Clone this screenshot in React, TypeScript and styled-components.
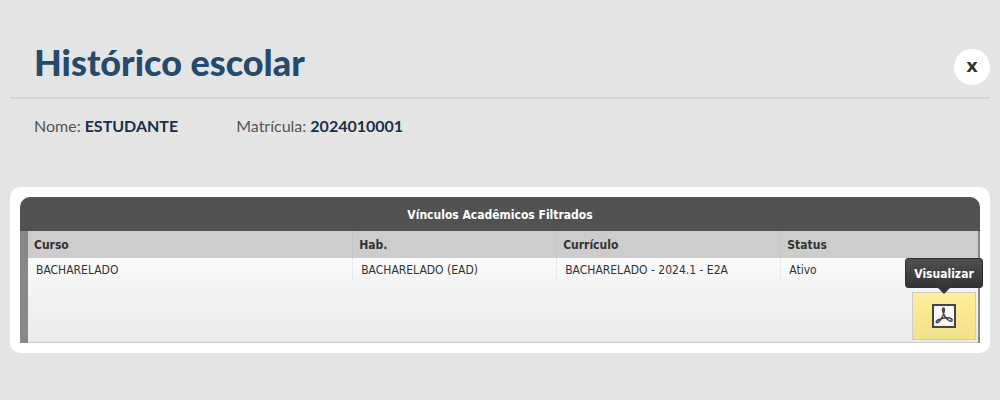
import React from "react";
import styled, { createGlobalStyle } from "styled-components";

const GlobalStyle = createGlobalStyle`
  *, *::before, *::after { box-sizing: border-box; }
  body {
    margin: 0;
    background: #e4e4e4;
    color: #333;
    font: 12px/16px "DejaVu Sans Condensed", "DejaVu Sans", sans-serif;
  }
`;

const Page = styled.main`
  padding: 38px 10px;
`;

const Header = styled.header`
  display: flex;
  align-items: center;
  justify-content: space-between;
  padding: 0 0 11px 24px;
  border-bottom: 2px solid #d5d5d5;
`;

const Title = styled.h1`
  margin: 0;
  color: #264a6e;
  font: 900 36px/48px "Lato Black", Lato, sans-serif;
`;

const CloseButton = styled.button`
  width: 36px;
  height: 36px;
  margin-top: 10px;
  padding: 0 0 2px;
  border: 0;
  border-radius: 50%;
  background: #fff;
  color: #333;
  font: 700 18px/34px "DejaVu Sans", sans-serif;
  cursor: pointer;
`;

const Details = styled.dl`
  display: flex;
  gap: 58px;
  margin: 15px 24px 49px;
  font: 16px/24px Lato, sans-serif;
`;

const Detail = styled.div`
  display: flex;
  gap: 4px;
`;

const Label = styled.dt`
  color: #555;
`;

const Value = styled.dd`
  margin: 0;
  color: #1a3048;
  font-weight: 700;
`;

const Panel = styled.section`
  padding: 10px;
  border-radius: 10px;
  background: #fff;
`;

const Table = styled.table`
  width: 100%;
  border-spacing: 0;
  table-layout: fixed;
`;

const Caption = styled.caption`
  padding: 10px 8px 8px;
  border-radius: 10px 10px 0 0;
  background: #525252;
  color: #fff;
  font-weight: 700;
`;

const Column = styled.col<{ $share: number }>`
  width: ${(p) => p.$share}%;
`;

const HeadCell = styled.th`
  height: 27px;
  padding: 0 6px;
  border-left: 1px dotted #bbb;
  background: #ccc;
  text-align: left;

  &:first-child { border-left: 8px solid #888; }
  &:last-child { border-right: 2px solid #888; }
`;

const Body = styled.tbody`
  background: linear-gradient(#fafafa, #e9e9e9);
`;

const Cell = styled.td`
  height: 22px;
  padding: 2px 8px 0;
  border-left: 1px dotted #ddd;

  &:first-child { border-left: 8px solid #888; }
  &:last-child { border-right: 2px solid #888; }
`;

const ActionCell = styled.td`
  height: 63px;
  padding: 12px 2px 3px;
  border: solid #888;
  border-width: 0 2px 0 8px;
  box-shadow: inset 0 -1px #ccc;
`;

const Action = styled.div`
  position: relative;
  width: 64px;
  margin-left: auto;
`;

const PdfButton = styled.button`
  display: flex;
  align-items: center;
  justify-content: center;
  width: 100%;
  height: 48px;
  padding: 0;
  border: 1px solid #ccc;
  background: linear-gradient(#ffef9b, #f0e08b);
  cursor: pointer;
`;

const Tooltip = styled.span`
  position: absolute;
  bottom: 100%;
  left: 50%;
  width: 78px;
  margin: 0 0 4px -39px;
  padding: 7px 0 5px;
  border: 1px solid #303030;
  border-radius: 3px;
  background: linear-gradient(#505050, #333);
  color: #fff;
  font-weight: 700;
  text-align: center;

  &::after {
    content: "";
    position: absolute;
    top: 100%;
    left: 50%;
    margin-left: -7px;
    border: solid transparent;
    border-width: 7px 7px 0;
    border-top-color: #333;
  }
`;

const PdfIcon = () => (
  <svg width="24" height="24" viewBox="0 0 24 24" fill="none" aria-hidden="true">
    <rect x="1" y="1" width="22" height="22" fill="#f8f8f8" stroke="#444" strokeWidth="2" />
    <path
      d="M11.5 4C10 4 10.5 7 11.7 10C13 13 15.5 16 18 17C20 17.7 21 16 19.5 14.8C17 13.3 12 13.8 8.5 15C5 16 3.5 17.5 4.5 18.5C6 19.5 9 16 11 11.5C12.3 8 13 4 11.5 4Z"
      stroke="#444"
      strokeWidth="1.5"
      strokeLinejoin="round"
    />
  </svg>
);

const columns = [
  { title: "Curso", share: 34.6, value: "BACHARELADO" },
  { title: "Hab.", share: 21.25, value: "BACHARELADO (EAD)" },
  { title: "Currículo", share: 23.35, value: "BACHARELADO - 2024.1 - E2A" },
  { title: "Status", share: 20.8, value: "Ativo" },
];

export default function App() {
  return (
    <Page>
      <GlobalStyle />
      <Header>
        <Title>Histórico escolar</Title>
        <CloseButton type="button">x</CloseButton>
      </Header>
      <Details>
        <Detail>
          <Label>Nome:</Label>
          <Value>ESTUDANTE</Value>
        </Detail>
        <Detail>
          <Label>Matrícula:</Label>
          <Value>2024010001</Value>
        </Detail>
      </Details>
      <Panel>
        <Table>
          <Caption>Vínculos Acadêmicos Filtrados</Caption>
          <colgroup>
            {columns.map((c) => <Column key={c.title} $share={c.share} />)}
          </colgroup>
          <thead>
            <tr>{columns.map((c) => <HeadCell key={c.title} scope="col">{c.title}</HeadCell>)}</tr>
          </thead>
          <Body>
            <tr>{columns.map((c) => <Cell key={c.title}>{c.value}</Cell>)}</tr>
            <tr>
              <ActionCell colSpan={4}>
                <Action>
                  <PdfButton type="button" aria-labelledby="view-tip"><PdfIcon /></PdfButton>
                  <Tooltip id="view-tip" role="tooltip">Visualizar</Tooltip>
                </Action>
              </ActionCell>
            </tr>
          </Body>
        </Table>
      </Panel>
    </Page>
  );
}
